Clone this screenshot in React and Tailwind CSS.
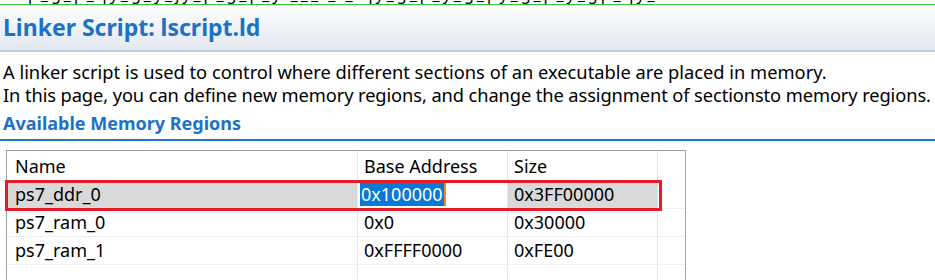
const rows = [
  { name: "ps7_ddr_0", base: "0x100000", size: "0x3FF00000", selected: true },
  { name: "ps7_ram_0", base: "0x0", size: "0x30000" },
  { name: "ps7_ram_1", base: "0xFFFF0000", size: "0xFE00" },
  { name: "", base: "", size: "" },
];

const font = { fontFamily: '"Noto Sans", "Open Sans", sans-serif' };

export default function App() {
  return (
    <div className="w-[935px] h-[280px] overflow-hidden bg-white text-black" style={font}>
      {/* clipped line from the editor above */}
      <div className="h-[4px] overflow-hidden">
        <div className="-mt-[15px] pl-[28px] text-[16px] leading-[18px] whitespace-nowrap tracking-[3px]">
          p_g_p_qy_g_y_jy_p_g_p_y     ___   _     _ qy_g_p_y_g_py_g_p_y_gp_qy_
        </div>
      </div>
      <div className="h-px bg-[#38c938]" />

      {/* page header */}
      <div className="h-[47px] flex items-center pl-[3px] bg-gradient-to-b from-[#fefeff] to-[#e2e8f1] border-b-2 border-[#b8cbe0]">
        <h1 className="text-[23px] font-bold text-[#1a72c9] leading-none">Linker Script: lscript.ld</h1>
      </div>

      {/* description */}
      <div className="pl-[3px] pt-[8px] text-[18.3px] leading-[23px] whitespace-nowrap">
        <p>A linker script is used to control where different sections of an executable are placed in memory.</p>
        <p className="tracking-[-0.1px]">In this page, you can define new memory regions, and change the assignment of sectionsto memory regions.</p>
      </div>

      {/* section title */}
      <div className="mt-[5px] pl-[3px] pb-[4px] border-b-2 border-[#1b78d0]">
        <h2 className="text-[18px] font-bold text-[#1a72c9] leading-[24px]">Available Memory Regions</h2>
      </div>

      {/* table */}
      <div className="relative mt-[9px] ml-[6px] w-[680px] border border-[#a0a0a0] border-b-0">
        <div className="grid grid-cols-[351px_150px_150px_1fr] h-[30px] text-[18px]">
          <div className="pl-[8px] flex items-center border-r border-[#e6e6e6]">Name</div>
          <div className="pl-[6px] flex items-center border-r border-[#e6e6e6]">Base Address</div>
          <div className="pl-[6px] flex items-center border-r border-[#e6e6e6]">Size</div>
          <div />
        </div>
        {rows.map((r, i) => (
          <div
            key={i}
            className="grid grid-cols-[351px_150px_150px_1fr] h-[28px] text-[18px] border-b border-[#efefef]"
          >
            <div className={`pl-[8px] flex items-center border-r border-[#e6e6e6] ${r.selected ? "bg-[#d9d9d9]" : ""}`}>
              {r.name}
            </div>
            <div className="pl-[2px] flex items-center border-r border-[#e6e6e6]">
              {r.selected ? (
                <span className="bg-[#0a78d7] text-white px-[1px] leading-[23px] border-r-2 border-[#f08a24]">{r.base}</span>
              ) : (
                <span className="pl-[4px]">{r.base}</span>
              )}
            </div>
            <div className={`pl-[6px] flex items-center border-r border-[#e6e6e6] ${r.selected ? "bg-[#d9d9d9]" : ""}`}>
              {r.size}
            </div>
            <div />
          </div>
        ))}
        {/* red annotation box */}
        <div className="absolute left-[-2px] top-[29px] w-[657px] h-[31px] border-[3px] border-[#e21d28] pointer-events-none" />
      </div>
    </div>
  );
}
